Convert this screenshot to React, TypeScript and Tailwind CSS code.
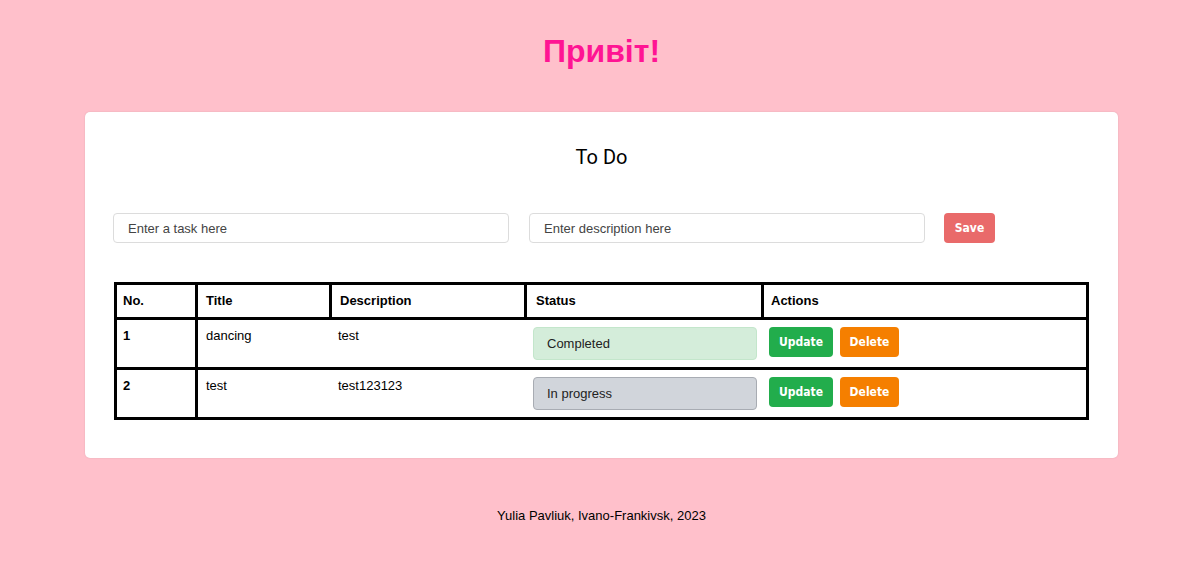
import React from "react";

const narrow: React.CSSProperties = {
  fontFamily: '"Liberation Sans Narrow", "DejaVu Sans", sans-serif',
  fontStretch: "condensed",
};

type Row = { no: number; title: string; desc: string; status: "Completed" | "In progress" };

const rows: Row[] = [
  { no: 1, title: "dancing", desc: "test", status: "Completed" },
  { no: 2, title: "test", desc: "test123123", status: "In progress" },
];

export default function App() {
  return (
    <div
      className="min-h-[570px] w-full bg-[#ffc0cb] pb-[47px] text-black"
      style={{ fontFamily: '"Liberation Sans", Arial, sans-serif' }}
    >
      <h1 className="pt-[33px] pl-[85px] w-[1118px] text-center text-[32px] leading-[37px] font-bold text-[#ff1493]">
        Привіт!
      </h1>

      <div className="ml-[85px] mt-[42px] w-[1033px] rounded-[5px] bg-white px-[28px] pt-[33px] pb-[38px] shadow-[0_0_2px_rgba(0,0,0,0.12)]">
        <h2
          className="text-center text-[20px] leading-[24px] font-normal text-black"
          style={{ fontFamily: 'Roboto, "Liberation Sans", sans-serif' }}
        >
          To Do
        </h2>

        <div className="mt-[44px] flex items-center">
          <input
            type="text"
            placeholder="Enter a task here"
            className="h-[30px] w-[396px] rounded-[4px] border border-[#dcdcdc] pl-[14px] text-[13px] outline-none placeholder:text-[#444]"
          />
          <input
            type="text"
            placeholder="Enter description here"
            className="ml-[20px] h-[30px] w-[396px] rounded-[4px] border border-[#dcdcdc] pl-[14px] text-[13px] outline-none placeholder:text-[#444]"
          />
          <button
            className="ml-[19px] h-[30px] w-[51px] rounded-[4px] bg-[#e96a6a] text-[12px] font-bold text-white"
            style={narrow}
          >
            Save
          </button>
        </div>

        <div className="ml-px mt-[39px] w-[975px] border-[3px] border-black text-[13px]">
          <div className="grid grid-cols-[81px_134px_195px_237px_322px]">
            <div className="flex h-[35px] items-center border-r-[3px] border-b-[3px] border-black pl-[6px] font-bold">No.</div>
            <div className="flex h-[35px] items-center border-r-[3px] border-b-[3px] border-black pl-[8px] font-bold">Title</div>
            <div className="flex h-[35px] items-center border-r-[3px] border-b-[3px] border-black pl-[8px] font-bold">Description</div>
            <div className="flex h-[35px] items-center border-r-[3px] border-b-[3px] border-black pl-[9px] font-bold">Status</div>
            <div className="flex h-[35px] items-center border-b-[3px] border-black pl-[7px] font-bold">Actions</div>

            {rows.map((r, i) => {
              const last = i === rows.length - 1;
              const rowCls = last ? "h-[47px]" : "h-[50px] border-b-[3px] border-black";
              const done = r.status === "Completed";
              return (
                <React.Fragment key={r.no}>
                  <div className={`${rowCls} border-r-[3px] border-black pl-[6px] pt-[8px] leading-[16px] font-bold`}>{r.no}</div>
                  <div className={`${rowCls} pl-[8px] pt-[8px] leading-[16px]`}>{r.title}</div>
                  <div className={`${rowCls} pl-[6px] pt-[8px] leading-[16px]`}>{r.desc}</div>
                  <div className={`${rowCls} pl-[6px] pt-[7px]`}>
                    <select
                      defaultValue={r.status}
                      className={`h-[33px] w-[224px] appearance-none rounded-[4px] border pl-[13px] text-[13px] text-[#222] outline-none ${
                        done ? "border-[#c3e6cb] bg-[#d4edda]" : "border-[#a8acb3] bg-[#d1d5db]"
                      }`}
                      style={{ fontFamily: '"Liberation Sans", Arial, sans-serif' }}
                    >
                      <option>Completed</option>
                      <option>In progress</option>
                    </select>
                  </div>
                  <div className={`${rowCls} flex items-start gap-[7px] pl-[5px] pt-[7px]`}>
                    <button
                      className="h-[30px] w-[64px] rounded-[4px] bg-[#22ad4c] text-[12px] font-bold text-white"
                      style={narrow}
                    >
                      Update
                    </button>
                    <button
                      className="h-[30px] w-[59px] rounded-[4px] bg-[#f57f00] text-[12px] font-bold text-white"
                      style={narrow}
                    >
                      Delete
                    </button>
                  </div>
                </React.Fragment>
              );
            })}
          </div>
        </div>
      </div>

      <footer className="mt-[50px] w-[1203px] text-center text-[13px] leading-[16px]">
        Yulia Pavliuk, Ivano-Frankivsk, 2023
      </footer>
    </div>
  );
}
